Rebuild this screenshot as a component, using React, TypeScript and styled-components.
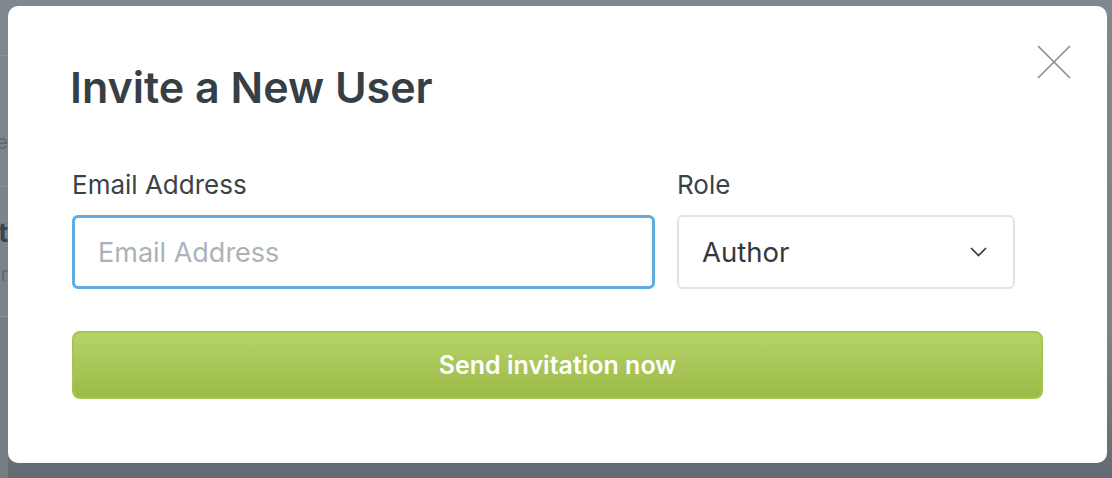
import React from "react";
import styled, { createGlobalStyle } from "styled-components";

const GlobalStyle = createGlobalStyle`
  html, body { margin: 0; padding: 0; }
  body {
    font-family: Inter, "Noto Sans", "Liberation Sans", sans-serif;
    background: #7e878d;
    overflow: hidden;
  }
`;

const Screen = styled.div`
  position: relative;
  width: 1112px;
  height: 478px;
  overflow: hidden;
  background: linear-gradient(180deg, #7f888e 0%, #7a8389 70%, #656a72 100%);
`;

// page peeking out behind the dialog
const BehindPage = styled.div`
  width: 8px;
  height: 100%;
  display: flex;
  flex-direction: column;
  padding-top: 55px;
  box-sizing: border-box;
`;

const BehindRow = styled.div<{ $h: number; $top?: number; $dark?: boolean }>`
  height: ${(p) => p.$h}px;
  box-sizing: border-box;
  border-top: 1px solid #8b9399;
  background: ${(p) => (p.$dark ? "#767e84" : "transparent")};
  display: flex;
  flex-direction: column;
  justify-content: ${(p) => (p.$top ? "flex-start" : "center")};
  padding-top: ${(p) => p.$top ?? 0}px;
  gap: 14px;
  overflow: hidden;
`;

const BehindText = styled.div<{ $bold?: boolean }>`
  display: flex;
  justify-content: flex-end;
  white-space: nowrap;
  font-size: ${(p) => (p.$bold ? 26 : 20)}px;
  font-weight: ${(p) => (p.$bold ? 700 : 400)};
  color: ${(p) => (p.$bold ? "#3c454b" : "#5f686e")};
`;

const Overlay = styled.div`
  position: absolute;
  inset: 6px 5px 15px 8px;
`;

const Modal = styled.div`
  position: relative;
  height: 100%;
  box-sizing: border-box;
  background: #fff;
  border-radius: 10px;
  padding: 58px 64px 0 64px;
  color: #363f45;
`;

const Close = styled.button`
  position: absolute;
  top: 39px;
  right: 36px;
  width: 34px;
  height: 34px;
  padding: 0;
  border: 0;
  background: none;
  cursor: pointer;
`;

const Title = styled.h1`
  margin: 0 0 0 -2px;
  font-size: 43px;
  line-height: 46px;
  font-weight: 600;
  color: #363f45;
`;

const FormRow = styled.div`
  display: flex;
  gap: 22px;
  margin-top: 61px;
  padding-right: 28px;
`;

const Field = styled.label<{ $grow?: boolean; $w?: number }>`
  display: flex;
  flex-direction: column;
  gap: 16px;
  flex: ${(p) => (p.$grow ? "1 1 auto" : `0 0 ${p.$w}px`)};
`;

const Label = styled.span`
  font-size: 26px;
  line-height: 28px;
  color: #3a4349;
`;

const Input = styled.input`
  height: 74px;
  box-sizing: border-box;
  border: 3px solid #5dade2;
  border-radius: 6px;
  padding: 0 23px;
  font-family: inherit;
  font-size: 27px;
  color: #33393d;
  outline: none;
  &::placeholder { color: #a9b3ba; }
`;

const SelectBox = styled.div`
  height: 74px;
  box-sizing: border-box;
  border: 2px solid #dde4ea;
  border-radius: 6px;
  padding: 0 26px 0 23px;
  display: flex;
  align-items: center;
  justify-content: space-between;
  font-size: 27.5px;
  color: #33393d;
`;

const SendButton = styled.button`
  display: block;
  box-sizing: border-box;
  margin-top: 42px;
  width: 971px;
  height: 68px;
  border: 2px solid #a6c550;
  border-radius: 8px;
  background: linear-gradient(180deg, #b6d369 0%, #9cba47 100%);
  color: #fff;
  font-family: inherit;
  font-size: 25px;
  font-weight: 600;
  cursor: pointer;
`;

export default function App() {
  return (
    <>
      <GlobalStyle />
      <Screen>
        <BehindPage>
          <BehindRow $h={131} $top={74}>
            <BehindText>Invite people</BehindText>
          </BehindRow>
          <BehindRow $h={130}>
            <BehindText $bold>Latest</BehindText>
            <BehindText>Author</BehindText>
          </BehindRow>
          <BehindRow $h={162} $dark />
        </BehindPage>
        <Overlay>
          <Modal>
            <Close aria-label="Close">
              <svg width="34" height="34" viewBox="0 0 34 34">
                <path d="M1 1 L33 33 M33 1 L1 33" stroke="#8a8c8e" strokeWidth="1.6" fill="none" />
              </svg>
            </Close>
            <Title>Invite a New User</Title>
            <FormRow>
              <Field $grow>
                <Label>Email Address</Label>
                <Input placeholder="Email Address" />
              </Field>
              <Field $w={338}>
                <Label>Role</Label>
                <SelectBox>
                  Author
                  <svg width="17" height="10" viewBox="0 0 17 10">
                    <path d="M1 1 L8.5 8.5 L16 1" stroke="#33393d" strokeWidth="1.7" fill="none" />
                  </svg>
                </SelectBox>
              </Field>
            </FormRow>
            <SendButton>Send invitation now</SendButton>
          </Modal>
        </Overlay>
      </Screen>
    </>
  );
}
